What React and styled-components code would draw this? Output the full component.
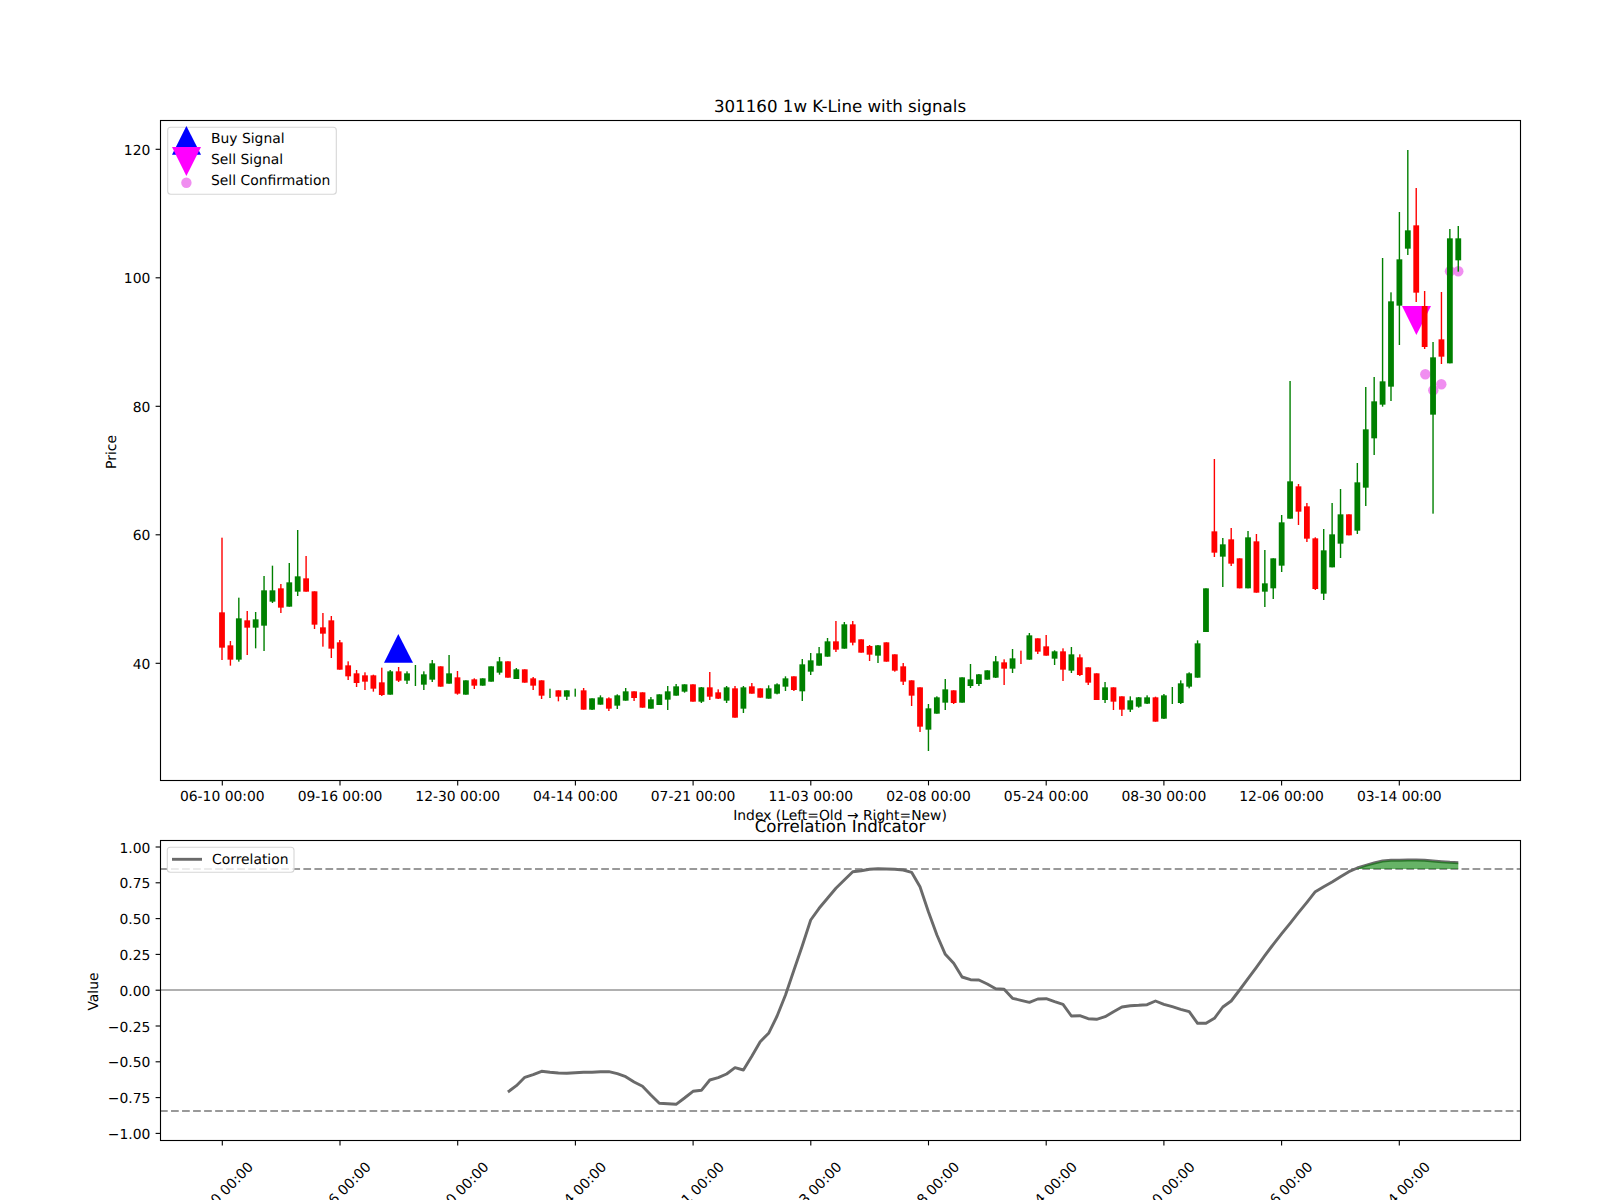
import React from 'react';
import styled, { createGlobalStyle } from 'styled-components';

const Global = createGlobalStyle`
  html, body { margin: 0; padding: 0; background: #fff; }
  #root { width: 1600px; height: 1200px; }
`;

const Figure = styled.main`
  display: flex;
  flex-direction: column;
  width: 1600px;
  height: 1200px;
  overflow: hidden;
  background: #fff;
`;

const Panel = styled.svg`
  display: block;
  flex: none;
  width: 1600px;
  height: ${p => p.$h}px;
  overflow: visible;
`;

const Label = styled.text`
  font-family: "DejaVu Sans", "Liberation Sans", sans-serif;
  font-size: 13.89px;
  fill: #000;
  text-rendering: geometricPrecision;
  text-anchor: ${p => p.$anchor || 'middle'};
  dominant-baseline: ${p => p.$base || 'auto'};
`;

const Title = styled.text`
  font-family: "DejaVu Sans", "Liberation Sans", sans-serif;
  font-size: 16.67px;
  fill: #000;
  text-rendering: geometricPrecision;
  text-anchor: middle;
`;

const Frame = styled.rect`
  fill: none;
  stroke: #000;
  stroke-width: 1.11px;
`;

const TickMark = styled.line`
  stroke: #000;
  stroke-width: 1.11px;
`;

const LegendBox = styled.rect`
  fill: #fff;
  fill-opacity: 0.8;
  stroke: #d6d6d6;
  stroke-width: 1.11px;
`;

const RefLine = styled.line`
  stroke: ${p => p.$color};
  stroke-width: 2.08px;
  stroke-dasharray: ${p => (p.$dashed ? '7.7 3.33' : 'none')};
`;

const CurveLine = styled.polyline`
  fill: none;
  stroke: #6a6a6a;
  stroke-width: 2.9px;
  stroke-linejoin: round;
`;

const Marker = styled.polygon`
  fill: ${p => p.$color};
`;

const Dot = styled.circle`
  fill: #ee82ee;
  fill-opacity: 0.9;
`;

const sec = (offset, rows) =>
  rows.map(([c, wt, wb, bt, bb]) => ({
    c,
    wt: offset + wt / 3,
    wb: offset + wb / 3,
    bt: bt == null ? null : offset + bt / 3,
    bb: bb == null ? null : offset + bb / 3,
  }));

const R = 'r';
const G = 'g';

const candles = [
  ...sec(500, [
    [R,113,480,337,443],[R,423,497,436,479],[G,293,485,355,479],[R,333,465,361,383],[G,336,445,358,383],
    [G,228,453,271,377],[G,197,309,271,305],[R,252,339,265,323],[G,189,320,247,320],[G,90,288,229,275],
    [R,168,275,235,275],[R,274,387,274,374],[R,339,440,382,401],[R,348,474,361,446],[R,420,509,427,509],
    [R,484,540,496,529],[R,510,561,520,549],[R,517,570,526,545],[R,524,575,526,566],[R,503,588,547,585],
    [G,510,584,514,584],[R,501,546,514,542],[G,514,552,520,542],[G,495,558],[G,514,570,523,554],
    [G,480,546,490,539],[R,499,560,499,560],[G,465,551,520,551],[R,513,584,532,581],[G,541,584,541,584],
    [R,535,567,538,557],[G,535,557,535,557],[G,499,545,499,545],[G,471,524,484,518],[R,484,533,484,533],
    [G,504,537,508,537],[R,508,548,508,548],[R,531,570,535,557],[R,541,597,541,587],[G,566,594],
    [R,571,604,571,590],[G,571,600,571,590],[G,566,590],[R,564,629,571,629],[G,595,630,595,629],
    [G,586,614,592,614],[R,592,633,595,626],[G,583,627,586,617],[G,564,602,574,602],[R,574,603,574,594],
  ]),
  ...sec(580, [
    [R,337,383,337,383],
    [G,351,386,358,386],[G,343,375,343,375],[G,318,390,334,359],[G,312,347,319,347],[G,313,338,313,335],
    [R,313,365,313,365],[G,321,369,322,365],[R,276,360,322,350],[R,328,357,337,356],[G,318,369,322,362],
    [R,318,413,325,413],[G,318,399,322,386],[R,309,341,319,341],[R,325,353,325,353],[G,316,356,325,356],
    [G,310,343,313,341],[G,289,333,295,320],[R,289,333,289,330],[G,237,363,253,334],[G,219,285,241,275],
    [G,201,257,220,257],[G,174,230,184,230],[R,123,216,184,209],[G,126,206,133,206],[R,123,196,133,188],
    [R,178,218,178,218],[R,195,243,198,224],[G,195,249,196,227],[R,187,245,187,245],[R,223,275,223,272],
    [R,249,315,259,305],[R,301,378,301,347],[R,322,456,322,440],[G,372,513,385,449],[G,349,401,352,401],
    [G,297,390,328,368],[R,331,372,331,369],[G,292,368,292,368],[G,252,324,298,318],[G,282,318,283,312],
    [G,271,299,271,299],[G,228,294,244,293],[R,238,315,247,266],[G,207,279,235,266],[R,212,252],
    [G,159,239,166,239],[R,175,222,175,215],[R,165,227,199,227],[G,211,255,214,236],[R,205,303,214,269],
    [G,201,279,223,272],[R,223,288,232,285],[R,262,315,262,308],[R,280,360,280,360],[G,306,369,322,360],
    [R,322,390,322,365],[R,349,408,349,389],[G,349,396,361,389],[G,351,383,352,380],[G,346,372,352,371],
    [R,350,425,352,425],[G,342,417,346,416],[G,321,372],[G,301,372,310,369],[G,277,325,280,320],
    [G,181,293,190,293],
  ]),
  ...sec(430, [
    [G,475,606,475,606],[R,87,381,304,368],[G,324,471,343,380],[R,294,408,328,401],[R,385,475,385,475],
    [G,303,475,322,475],[R,312,488,334,488],[G,360,531,460,485],[G,385,507,385,475],[G,255,426,277,407],
    [G,-147,266,154,266],[R,162,285,169,245],[R,219,336,229,326],[R,322,480,325,477],[G,297,510,361,491],
    [G,219,412,313,412],[G,177,384,253,341],[R,253,316,253,316],[G,99,312,157,302],[G,-129,228,-2,173],
    [G,-159,75,-86,25],
  ]),
  ...sec(130, [
    [G,384,830,754,824],[G,487,813,514,770],[G,246,645,388,527],[G,60,375,301,356],[R,174,516,286,488],
    [R,483,657,528,651],[G,636,1151,682,854],[R,486,702,628,680],[G,297,700,325,700],[G,288,425,325,391],
  ]),
];

const curveSec = (start, offset, ys) => ys.map((y, k) => [start + k, offset + y / 3]);

const curve = [
  ...curveSec(34, 970, [366,347,322,314,304,307,309,310,308,307,307,305,305,311,320,336,349,375,400,401,403,384,364,361,330,323,312,293,300,259,215,190,138,75]),
  ...curveSec(68, 850, [361,287,210,175,145,115,90,65,62,58,56,57,58,60,67,110,185,255,313,340,381,389,390,402,416]),
  ...curveSec(93, 940, [148,175,181,187,177,176,185,193,228,227,236,238,230,215,201,197,196,194,183,193,200,208,215,250,250,235,201,183,150,116,82,47,13]),
  ...curveSec(126, 830, [311,280,248,217,185,170,156,140,125,114,106,99,93,91,91,90,90,91,93,95,97,98]),
];

const xOf = i => 222 + 8.41 * i;
const corrPts = curve.map(([i, y]) => `${xOf(i).toFixed(1)},${y.toFixed(1)}`).join(' ');
const fillPts = [
  '1356,869',
  ...curve.filter(([i]) => i >= 136).map(([i, y]) => `${xOf(i).toFixed(1)},${y.toFixed(1)}`),
  `${xOf(147).toFixed(1)},869`,
].join(' ');

const dates = ['06-10 00:00','09-16 00:00','12-30 00:00','04-14 00:00','07-21 00:00','11-03 00:00','02-08 00:00','05-24 00:00','08-30 00:00','12-06 00:00','03-14 00:00'];
const priceTicks = [[120,149.3],[100,277.8],[80,406.3],[60,534.8],[40,663.3]];
const valueTicks = ['1.00','0.75','0.50','0.25','0.00','\u22120.25','\u22120.50','\u22120.75','\u22121.00'];
const confirmDots = [[1425.3,374.3],[1433.3,390.3],[1441.3,384.3],[1450,271.3],[1458.3,271.3]];
const colors = { r: '#ff0000', g: '#008000' };

const Candle = ({ d, i }) => {
  const x = xOf(i);
  return (
    <g fill={colors[d.c]}>
      <rect x={x - 0.7} y={d.wt} width={1.4} height={d.wb - d.wt} />
      {d.bt != null && <rect x={x - 2.9} y={d.bt} width={5.8} height={d.bb - d.bt} />}
    </g>
  );
};

export default function App() {
  return (
    <Figure>
      <Global />
      <Panel $h={800} viewBox="0 0 1600 800">
        <Title x={840} y={112}>301160 1w K-Line with signals</Title>
        {confirmDots.map(([cx, cy]) => <Dot key={cx} cx={cx} cy={cy} r={5.2} />)}
        <Marker $color="#0000ff" points="398.3,634 413,662.7 384,662.7" />
        <Marker $color="#ff00ff" points="1402,306 1431,306 1416.4,335" />
        {candles.map((d, i) => <Candle key={i} d={d} i={i} />)}
        <Frame x={160.5} y={120.5} width={1360} height={660} />
        {dates.map((t, k) => {
          const x = 222.3 + 117.7 * k;
          return (
            <g key={t}>
              <TickMark x1={x} x2={x} y1={780.5} y2={785.4} />
              <Label x={x} y={801}>{t}</Label>
            </g>
          );
        })}
        {priceTicks.map(([v, y]) => (
          <g key={v}>
            <TickMark x1={155.6} x2={160.5} y1={y} y2={y} />
            <Label x={150.3} y={y + 5.5} $anchor="end">{v}</Label>
          </g>
        ))}
        <Label x={840} y={820}>Index (Left=Old → Right=New)</Label>
        <Label transform="translate(116,452) rotate(-90)">Price</Label>
        <LegendBox x={167.7} y={127.3} width={168.6} height={67} rx={3} />
        <Marker $color="#0000ff" points="186.4,126 201,154.7 172,154.7" />
        <Marker $color="#ff00ff" points="172,147 201,147 186.4,176" />
        <Dot cx={186.4} cy={182.7} r={5.2} />
        <Label x={211} y={143.3} $anchor="start">Buy Signal</Label>
        <Label x={211} y={164.3} $anchor="start">Sell Signal</Label>
        <Label x={211} y={185.3} $anchor="start">Sell Confirmation</Label>
      </Panel>
      <Panel $h={400} viewBox="0 800 1600 400">
        <Title x={840} y={832}>Correlation Indicator</Title>
        <RefLine $color="#b0b0b0" x1={160} x2={1520} y1={990} y2={990} />
        <RefLine $color="#999" $dashed x1={160} x2={1520} y1={869} y2={869} />
        <RefLine $color="#999" $dashed x1={160} x2={1520} y1={1111} y2={1111} />
        <CurveLine points={corrPts} />
        <Marker $color="rgba(0,128,0,0.6)" points={fillPts} />
        <Frame x={160.5} y={840.5} width={1360} height={300} />
        {dates.map((t, k) => {
          const x = 222.3 + 117.7 * k;
          return (
            <g key={t}>
              <TickMark x1={x} x2={x} y1={1140.5} y2={1145.4} />
              <Label transform={`translate(${x - 1},1195) rotate(-45)`} $base="central">{t}</Label>
            </g>
          );
        })}
        {valueTicks.map((t, k) => {
          const y = 847 + 35.8 * k;
          return (
            <g key={t}>
              <TickMark x1={155.6} x2={160.5} y1={y} y2={y} />
              <Label x={150.3} y={y + 5.5} $anchor="end">{t}</Label>
            </g>
          );
        })}
        <Label transform="translate(98,991.5) rotate(-90)">Value</Label>
        <LegendBox x={167.3} y={847.3} width={126.7} height={25} rx={3} />
        <CurveLine points="172,859.3 202,859.3" />
        <Label x={212} y={864.3} $anchor="start">Correlation</Label>
      </Panel>
    </Figure>
  );
}
